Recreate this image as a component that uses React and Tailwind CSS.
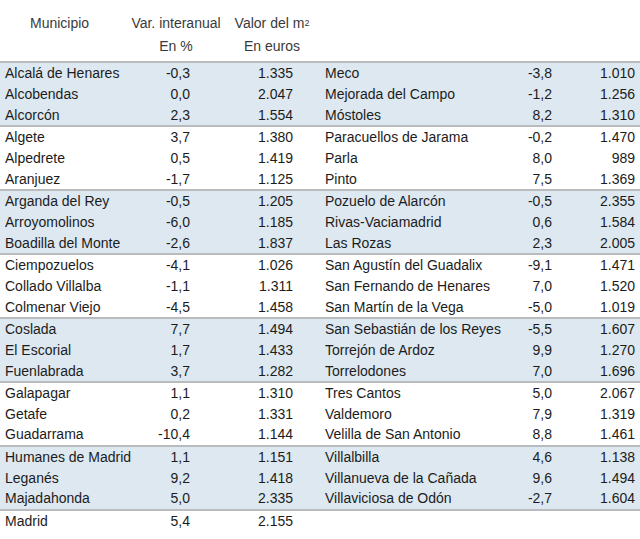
import React from 'react'

const groups = [
    {
        blue: true,
        rows: [
            ['Alcalá de Henares', '-0,3', '1.335', 'Meco', '-3,8', '1.010'],
            ['Alcobendas', '0,0', '2.047', 'Mejorada del Campo', '-1,2', '1.256'],
            ['Alcorcón', '2,3', '1.554', 'Móstoles', '8,2', '1.310'],
        ],
    },
    {
        blue: false,
        rows: [
            ['Algete', '3,7', '1.380', 'Paracuellos de Jarama', '-0,2', '1.470'],
            ['Alpedrete', '0,5', '1.419', 'Parla', '8,0', '989'],
            ['Aranjuez', '-1,7', '1.125', 'Pinto', '7,5', '1.369'],
        ],
    },
    {
        blue: true,
        rows: [
            ['Arganda del Rey', '-0,5', '1.205', 'Pozuelo de Alarcón', '-0,5', '2.355'],
            ['Arroyomolinos', '-6,0', '1.185', 'Rivas-Vaciamadrid', '0,6', '1.584'],
            ['Boadilla del Monte', '-2,6', '1.837', 'Las Rozas', '2,3', '2.005'],
        ],
    },
    {
        blue: false,
        rows: [
            ['Ciempozuelos', '-4,1', '1.026', 'San Agustín del Guadalix', '-9,1', '1.471'],
            ['Collado Villalba', '-1,1', '1.311', 'San Fernando de Henares', '7,0', '1.520'],
            ['Colmenar Viejo', '-4,5', '1.458', 'San Martín de la Vega', '-5,0', '1.019'],
        ],
    },
    {
        blue: true,
        rows: [
            ['Coslada', '7,7', '1.494', 'San Sebastián de los Reyes', '-5,5', '1.607'],
            ['El Escorial', '1,7', '1.433', 'Torrejón de Ardoz', '9,9', '1.270'],
            ['Fuenlabrada', '3,7', '1.282', 'Torrelodones', '7,0', '1.696'],
        ],
    },
    {
        blue: false,
        rows: [
            ['Galapagar', '1,1', '1.310', 'Tres Cantos', '5,0', '2.067'],
            ['Getafe', '0,2', '1.331', 'Valdemoro', '7,9', '1.319'],
            ['Guadarrama', '-10,4', '1.144', 'Velilla de San Antonio', '8,8', '1.461'],
        ],
    },
    {
        blue: true,
        rows: [
            ['Humanes de Madrid', '1,1', '1.151', 'Villalbilla', '4,6', '1.138'],
            ['Leganés', '9,2', '1.418', 'Villanueva de la Cañada', '9,6', '1.494'],
            ['Majadahonda', '5,0', '2.335', 'Villaviciosa de Odón', '-2,7', '1.604'],
        ],
    },
]

function Row({ r }) {
    return (
        <div className="grid grid-cols-[140px_45px_103px_32px_180px_47px_83px] pl-[5px] h-[20.67px] items-center leading-none">
            <span className="whitespace-nowrap">{r[0]}</span>
            <span className="text-right">{r[1]}</span>
            <span className="text-right">{r[2]}</span>
            <span></span>
            <span className="whitespace-nowrap">{r[3]}</span>
            <span className="text-right">{r[4]}</span>
            <span className="text-right">{r[5]}</span>
        </div>
    )
}

export default function App() {
    return (
        <div className="w-[640px] h-[539px] bg-white text-[14px] text-[#1c1c1c] font-['Liberation_Sans',Arial,sans-serif] overflow-hidden">
            <div className="grid grid-cols-[128px_96px_96px] pt-[12px] pb-[3px] text-[#3a3a3a]">
                <div className="pl-[30px] h-[23px] flex items-center">Municipio</div>
                <div className="h-[23px] flex items-center justify-center whitespace-nowrap">Var. interanual</div>
                <div className="h-[23px] flex items-center justify-center whitespace-nowrap">
                    Valor del m<sup className="text-[9px] relative -top-[1px]">2</sup>
                </div>
                <div className="h-[23px]"></div>
                <div className="h-[23px] flex items-center justify-center">En %</div>
                <div className="h-[23px] flex items-center justify-center">En euros</div>
            </div>
            {groups.map((g, i) => (
                <div
                    key={i}
                    className={`border-t-2 border-[#b9bcbf] ${g.blue ? 'bg-[#dde8f1]' : 'bg-white'} ${i === groups.length - 1 ? 'border-b-2' : ''}`}
                >
                    {g.rows.map((r, j) => (
                        <Row key={j} r={r} />
                    ))}
                </div>
            ))}
            <div className="grid grid-cols-[140px_45px_103px] pl-[5px] h-[20.67px] items-center leading-none">
                <span>Madrid</span>
                <span className="text-right">5,4</span>
                <span className="text-right">2.155</span>
            </div>
        </div>
    )
}
